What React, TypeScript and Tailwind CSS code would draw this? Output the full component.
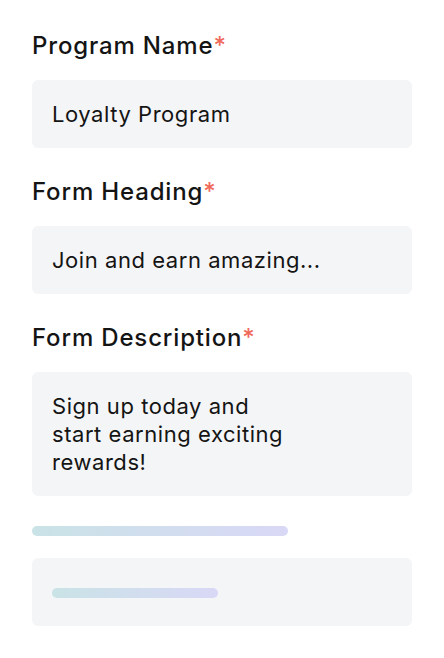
import React from 'react'

interface FieldProps {
  label: string
  children: React.ReactNode
}

function Field({ label, children }: FieldProps) {
  return (
    <div className="mt-7 first:mt-0">
      <label className="block text-[24px] leading-8 font-medium tracking-[0.035em] text-[#141414]">
        {label}
        <span className="text-[#f06a5c]">*</span>
      </label>
      <div className="mt-[18px] rounded-[6px] bg-[#f4f5f7] px-5 py-5 text-[22px] leading-7 tracking-[0.025em] text-[#141414]">
        {children}
      </div>
    </div>
  )
}

export default function App() {
  return (
    <div
      className="min-h-[658px] w-[444px] bg-white px-8 pt-[30px]"
      style={{ fontFamily: 'Inter, "Noto Sans", sans-serif' }}
    >
      <Field label="Program Name">Loyalty Program</Field>
      <Field label="Form Heading">Join and earn amazing...</Field>
      <Field label="Form Description">
        <span className="block">Sign up today and</span>
        <span className="block">start earning exciting</span>
        <span className="block">rewards!</span>
      </Field>

      {/* placeholder field */}
      <div className="mt-[30px] h-2.5 w-[256px] rounded-full bg-gradient-to-r from-[#c9e3e6] to-[#d9d8f6]" />
      <div className="mt-[22px] h-[68px] rounded-[6px] bg-[#f4f5f7] px-5 pt-[30px]">
        <div className="h-2.5 w-[166px] rounded-full bg-gradient-to-r from-[#c9e3e6] to-[#d9d8f6]" />
      </div>
    </div>
  )
}
